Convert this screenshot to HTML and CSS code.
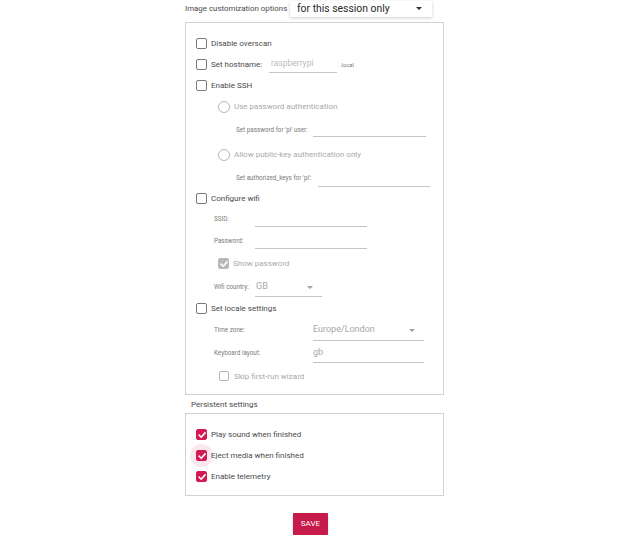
FILE: index.html
```html
<!DOCTYPE html>
<html>
<head>
<meta charset="utf-8">
<link rel="stylesheet" href="styles.css">
</head>
<body>
<div class="page">
  <div class="topbar">
    <span class="toplabel">Image customization options</span>
    <div class="combo-main">
      <span>for this session only</span>
      <span class="tri dark"></span>
    </div>
  </div>

  <div class="panel">
    <div class="row h21"><span class="cb"></span><span class="lbl">Disable overscan</span></div>
    <div class="row h21">
      <span class="cb"></span><span class="lbl w-host">Set hostname:</span>
      <span class="field f-host"><span class="ph">raspberrypi</span></span>
      <span class="tiny">.local</span>
    </div>
    <div class="row h21"><span class="cb"></span><span class="lbl">Enable SSH</span></div>
    <div class="row h21 ind"><span class="radio"></span><span class="lbl dis">Use password authentication</span></div>
    <div class="row h25 sub2">
      <span class="small w-pw">Set password for 'pi' user:</span>
      <span class="field f-pw"></span>
    </div>
    <div class="row h25 ind"><span class="radio"></span><span class="lbl dis">Allow public-key authentication only</span></div>
    <div class="row h21 sub2">
      <span class="small w-keys">Set authorized_keys for 'pi':</span>
      <span class="field f-keys"></span>
    </div>
    <div class="row h20"><span class="cb"></span><span class="lbl">Configure wifi</span></div>
    <div class="row h21 sub1">
      <span class="small w-wifi">SSID:</span>
      <span class="field f-wifi"></span>
    </div>
    <div class="row h23 sub1">
      <span class="small w-wifi">Password:</span>
      <span class="field f-wifi"></span>
    </div>
    <div class="row h23 ind">
      <span class="cb gray checked"><svg viewBox="0 0 10 10" class="tick"><polyline points="2.2,5.2 4.2,7.2 8,3" /></svg></span>
      <span class="lbl dis">Show password</span>
    </div>
    <div class="row h23 sub1">
      <span class="small w-wifi">Wifi country:</span>
      <span class="field combo f-country"><span class="val">GB</span><span class="tri"></span></span>
    </div>
    <div class="row h21"><span class="cb"></span><span class="lbl">Set locale settings</span></div>
    <div class="row h22 sub1">
      <span class="small w-locale">Time zone:</span>
      <span class="field combo f-locale"><span class="val">Europe/London</span><span class="tri"></span></span>
    </div>
    <div class="row h23 sub1">
      <span class="small w-locale">Keyboard layout:</span>
      <span class="field combo f-locale"><span class="val">gb</span></span>
    </div>
    <div class="row h24 ind2"><span class="cb lightcb"></span><span class="lbl dis">Skip first-run wizard</span></div>
  </div>

  <div class="section-title">Persistent settings</div>

  <div class="panel panel2">
    <div class="row h21">
      <span class="cb pink"><svg viewBox="0 0 10 10" class="tick"><polyline points="2.2,5.2 4.2,7.2 8,3" /></svg></span>
      <span class="lbl">Play sound when finished</span>
    </div>
    <div class="row h21">
      <span class="cbwrap"><span class="halo"></span><span class="cb pink"><svg viewBox="0 0 10 10" class="tick"><polyline points="2.2,5.2 4.2,7.2 8,3" /></svg></span></span>
      <span class="lbl">Eject media when finished</span>
    </div>
    <div class="row h21">
      <span class="cb pink"><svg viewBox="0 0 10 10" class="tick"><polyline points="2.2,5.2 4.2,7.2 8,3" /></svg></span>
      <span class="lbl">Enable telemetry</span>
    </div>
  </div>

  <div class="actions"><button class="save">SAVE</button></div>
</div>
</body>
</html>
```

FILE: styles.css
```css
body {
  margin: 0;
  background: #fff;
  font-family: Roboto, "Liberation Sans", sans-serif;
  color: #333;
}
.page {
  width: 259px;
  margin-left: 185px;
}
.topbar {
  display: flex;
  align-items: center;
  height: 17px;
}
.toplabel {
  font-size: 7.9px;
  color: #4a4a4a;
  width: 105px;
  flex: none;
  white-space: nowrap;
}
.combo-main {
  width: 142px;
  height: 16px;
  box-sizing: border-box;
  display: flex;
  align-items: center;
  justify-content: space-between;
  padding: 0 10px 0 7px;
  font-size: 10.4px;
  color: #2a2a2a;
  background: #fff;
  box-shadow: 0 1px 3px rgba(0, 0, 0, 0.2);
}
.tri {
  width: 0;
  height: 0;
  border-left: 3px solid transparent;
  border-right: 3px solid transparent;
  border-top: 3px solid #a0a0a0;
}
.tri.dark {
  border-top-color: #333;
}
.panel {
  border: 1px solid #d2d2d2;
  margin-top: 5px;
  padding: 10px 0 6px 10px;
}
.row {
  display: flex;
  align-items: center;
}
.h20 { height: 20px; }
.h21 { height: 21px; }
.h22 { height: 22px; }
.h23 { height: 23px; }
.h24 { height: 24px; }
.h25 { height: 25px; }
.ind { padding-left: 22px; }
.ind2 { padding-left: 23px; }
.sub1 { padding-left: 18px; }
.sub2 { padding-left: 40px; }
.cb {
  width: 11px;
  height: 11px;
  box-sizing: border-box;
  border: 1.5px solid #7a7a7a;
  border-radius: 2px;
  margin-right: 4px;
  flex: none;
  display: flex;
  align-items: center;
  justify-content: center;
  position: relative;
}
.cb.lightcb {
  border-color: #b5b5b5;
  width: 10px;
  height: 10px;
  margin-right: 5px;
}
.cb.gray {
  background: #b8b8b8;
  border-color: #b8b8b8;
}
.cb.pink {
  background: #d21b55;
  border-color: #d21b55;
}
.tick {
  width: 10px;
  height: 10px;
  flex: none;
}
.tick polyline {
  fill: none;
  stroke: #fff;
  stroke-width: 1.6;
  stroke-linecap: square;
}
.radio {
  width: 12px;
  height: 12px;
  box-sizing: border-box;
  border: 1.2px solid #b8b8b8;
  border-radius: 50%;
  margin-right: 4px;
  flex: none;
}
.lbl {
  font-size: 8px;
  color: #4a4a4a;
  white-space: nowrap;
}
.lbl.dis {
  color: #a9a9a9;
}
.small {
  font-size: 6.3px;
  color: #7a7a7a;
  white-space: nowrap;
  flex: none;
}
.tiny {
  font-size: 5.8px;
  color: #777;
  margin-left: 3px;
}
.w-host { width: 58px; flex: none; }
.w-pw { width: 77px; }
.w-keys { width: 82px; }
.w-wifi { width: 41px; }
.w-locale { width: 99px; }
.field {
  display: flex;
  align-items: center;
  box-sizing: border-box;
  height: 16px;
  border-bottom: 1px solid #c4c4c4;
  flex: none;
}
.f-host { width: 68px; padding-left: 2px; }
.f-pw { width: 113px; height: 14px; }
.f-keys { width: 112px; height: 14px; margin-top: 4px; }
.f-wifi { width: 112px; height: 15px; margin-top: 2px; }
.f-country { width: 67px; height: 18px; padding-left: 1px; padding-right: 9px; margin-top: 2px; }
.f-locale { width: 111px; height: 20px; padding-right: 9px; margin-top: 1px; }
.combo {
  justify-content: space-between;
}
.ph {
  font-size: 8.5px;
  color: #bcbcbc;
  margin-top: -3px;
}
.val {
  font-size: 9px;
  color: #a8a8a8;
  margin-top: -2px;
}
.section-title {
  height: 18px;
  display: flex;
  align-items: center;
  padding-left: 6px;
  font-size: 8px;
  color: #4a4a4a;
}
.panel2 {
  margin-top: 0;
  padding: 10px 0 8px 10px;
}
.cbwrap {
  position: relative;
  display: flex;
  flex: none;
}
.halo {
  position: absolute;
  left: -6px;
  top: -6px;
  width: 23px;
  height: 23px;
  border-radius: 50%;
  background: rgba(210, 27, 85, 0.1);
}
.actions {
  padding-left: 108px;
  padding-top: 15px;
}
.save {
  width: 35px;
  height: 22px;
  border: none;
  border-radius: 1px;
  background: #c51a4a;
  color: #fff;
  font-family: Roboto, "Liberation Sans", sans-serif;
  font-size: 8px;
  padding: 0;
  box-shadow: 0 1px 2px rgba(0, 0, 0, 0.25);
}
```
